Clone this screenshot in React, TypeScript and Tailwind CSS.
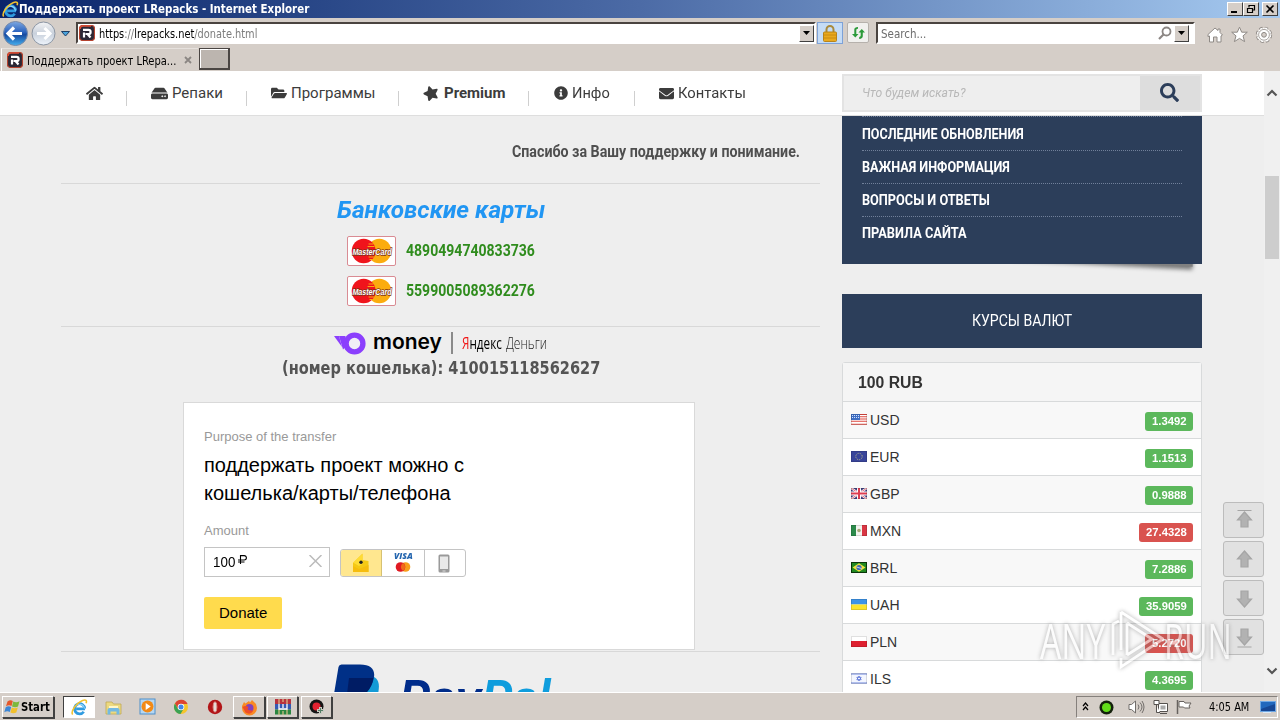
import React, { useLayoutEffect, useRef } from 'react';
import { FaHome, FaHdd, FaFolderOpen, FaStar, FaInfoCircle, FaEnvelope, FaSearch } from 'react-icons/fa';

/* Single line of text squeezed or stretched horizontally to a given width. */
function Fit({ w, className = '', children }: { w: number; className?: string; children: React.ReactNode }) {
  const ref = useRef<HTMLSpanElement>(null);
  useLayoutEffect(() => {
    const el = ref.current;
    if (el && el.offsetWidth) el.style.transform = `scaleX(${w / el.offsetWidth})`;
  }, [w]);
  return (
    <span className={`inline-flex shrink-0 justify-start whitespace-nowrap ${className}`} style={{ width: w }}>
      <span ref={ref} className="inline-block shrink-0 origin-left whitespace-pre">{children}</span>
    </span>
  );
}

const TAHOMA = "font-['DejaVu_Sans_Condensed','DejaVu_Sans',sans-serif]";
const RAISED = 'border border-t-white border-l-white border-r-[#404040] border-b-[#404040] bg-[#d5cec8]';

function IeLogo({ size = 16 }: { size?: number }) {
  return (
    <svg width={size} height={size} viewBox="0 0 16 16" fill="none">
      <path d="M13.2 9.2H4.8M12.9 9A4.8 4.8 0 1 0 12 12" stroke="#2f9be0" strokeWidth="2.6" />
      <path d="M12.7 9A4.8 4.8 0 0 0 4 7" stroke="#8fd4fa" strokeWidth="1" />
      <path d="M1.6 14.6C-.6 12 5 3.500 11 1.300c3-1 4.200 0 3.200 2.700" stroke="#f2c230" strokeWidth="1.500" />
    </svg>
  );
}

function Favicon() {
  return (
    <svg width="16" height="16" viewBox="0 0 16 16">
      <rect x=".5" y=".5" width="15" height="15" rx="3" fill="#2b2735" stroke="#b5432f" strokeWidth="1.200" />
      <path d="M1 4a3 3 0 0 1 3-3h8" stroke="#d94c34" strokeWidth="1.600" fill="none" />
      <path d="M4 4.800h5.500a2 2 0 0 1 0 4.200H6.500M5 7.500v5M8.500 9l3 3.500" stroke="#fff" strokeWidth="2.200" fill="none" />
    </svg>
  );
}

function DropArrow() {
  return (
    <span className={`flex h-[17px] w-[15px] shrink-0 items-center justify-center ${RAISED}`}>
      <svg width="7" height="4" viewBox="0 0 7 4"><path d="M0 0h7L3.500 4z" fill="#000" /></svg>
    </span>
  );
}

function TitleBar() {
  return (
    <div className="flex h-[18px] shrink-0 items-center bg-linear-to-r from-[#0a246a] via-[#4c6ba6] to-[#a6caf0] pr-[2px] pl-[2px]">
      <IeLogo size={17} />
      <Fit w={290} className={`${TAHOMA} text-[12px] leading-[18px] font-bold text-white`}>Поддержать проект LRepacks - Internet Explorer</Fit>
      <div className="ml-auto flex gap-0">
        <span className={`flex h-[14px] w-[16px] items-center justify-center ${RAISED}`}>
          <svg width="10" height="10"><path d="M1 8h6" stroke="#000" strokeWidth="2" /></svg>
        </span>
        <span className={`flex h-[14px] w-[16px] items-center justify-center ${RAISED}`}>
          <svg width="10" height="10" fill="none" stroke="#000"><path d="M3 1.500h6M3 1v2.500M8.500 1v5H7M1 4.500h6M1.500 4v4.500h5V4" strokeWidth="1.200" /></svg>
        </span>
        <span className={`ml-[3px] flex h-[14px] w-[16px] items-center justify-center ${RAISED}`}>
          <svg width="10" height="10"><path d="M1.500 1.500l7 7M8.500 1.500l-7 7" stroke="#000" strokeWidth="1.600" /></svg>
        </span>
      </div>
    </div>
  );
}

function AddressRow() {
  return (
    <div className="flex h-[30px] shrink-0 items-start">
      <svg width="72" height="30" viewBox="0 0 72 30" className="shrink-0">
        <defs>
          <linearGradient id="bk" x1="0" y1="0" x2="0" y2="1"><stop offset="0" stopColor="#7da8e2" /><stop offset=".45" stopColor="#2a62bd" /><stop offset=".55" stopColor="#174a9f" /><stop offset="1" stopColor="#45b0f0" /></linearGradient>
          <linearGradient id="fw" x1="0" y1="0" x2="0" y2="1"><stop offset="0" stopColor="#f4f4f5" /><stop offset=".5" stopColor="#c9d1dc" /><stop offset="1" stopColor="#eef4fb" /></linearGradient>
        </defs>
        <circle cx="15.500" cy="15.500" r="12" fill="url(#bk)" stroke="#788aa8" />
        <path d="M8 15.500h14M14 9.500l-6 6 6 6" stroke="#fff" strokeWidth="3.200" fill="none" />
        <circle cx="43.500" cy="15.500" r="11.500" fill="url(#fw)" stroke="#8b95a3" />
        <path d="M37 15.500h13M44.500 10l5.500 5.500-5.500 5.500" stroke="#fff" strokeWidth="3" fill="none" />
        <path d="M61.500 13.500h8l-4 4.500z" fill="#4aa3dc" stroke="#1e3f66" />
      </svg>
      <div className="mt-[4px] ml-[4px] flex h-[22px] w-[740px] shrink-0 items-center border-2 border-t-[#4a4440] border-r-white border-b-white border-l-[#4a4440] bg-white pl-[1px]">
        <Favicon />
        <Fit w={158} className={`${TAHOMA} mt-[1px] ml-[4px] text-[12px] leading-[16px] text-[#7c7c7c]`}>
          <span className="text-black">https</span>://<span className="text-black">lrepacks.net</span>/donate.html
        </Fit>
        <span className="ml-auto"><DropArrow /></span>
      </div>
      <span className="mt-[4px] ml-[1px] flex h-[22px] w-[26px] shrink-0 items-center justify-center border border-[#7da2d8] bg-[#c5dcf6]">
        <svg width="14" height="17" viewBox="0 0 14 17">
          <path d="M3.500 8V4.500a3.500 3.500 0 0 1 7 0V8" fill="none" stroke="#a98a3c" strokeWidth="2" />
          <rect x=".5" y="7" width="13" height="9.500" rx="1" fill="#e9a91f" stroke="#b8841a" />
          <path d="M1 10h12M1 13h12" stroke="#c98c14" />
        </svg>
      </span>
      <span className="mt-[4px] ml-[4px] flex h-[21px] w-[22px] shrink-0 items-center justify-center rounded-[2px] border border-[#b6b1ac] bg-[#f1f0ee]">
        <svg width="15" height="14" viewBox="0 0 15 14" fill="#2c9a3a">
          <path d="M3.300 8V3.500Q3.300 1 7 1v1.800Q5.300 2.800 5.300 4v4h2.200l-3.200 3.500L1 8z" /><path d="M11.800 6.500V10q0 2.700-3.600 2.900V11q1.500 0 1.500-1.400V6.500H7.500L10.800 3 14 6.500z" />
        </svg>
      </span>
      <div className="mt-[4px] ml-[7px] flex h-[22px] w-[319px] shrink-0 items-center border-2 border-t-[#4a4440] border-r-white border-b-white border-l-[#4a4440] bg-white pr-[4px] pl-[3px]">
        <Fit w={45} className={`${TAHOMA} mt-[2px] text-[12px] leading-[16px] text-[#6d6d6d]`}>Search...</Fit>
        <svg className="mr-[2px] ml-auto" width="14" height="14" viewBox="0 0 14 14" fill="none" stroke="#8b8683"><circle cx="8.500" cy="5.500" r="4" strokeWidth="1.800" /><path d="M5.500 8.500L1 13" strokeWidth="2.200" /></svg>
        <DropArrow />
      </div>
      <svg className="mt-[8px] ml-[11px]" width="68" height="18" viewBox="0 0 68 18" fill="#fff" stroke="#8f8a86" strokeLinejoin="round">
        <path d="M2 8.500L9 2l3 2.500V3h2v3.500l2.500 2.500-1.500 1V16h-4v-5H7.500v5h-4v-6l-1.500.5z" />
        <path d="M33.500 1.200l2.200 5h5.600l-4.300 3.700 1.600 5.700-5.100-3.200-5.100 3.200L30 9.900l-4.300-3.700h5.600z" />
        <circle cx="58" cy="8.800" r="6.500" strokeWidth="3.400" strokeDasharray="3 2.100" /><circle cx="58" cy="8.800" r="6.500" stroke="#fff" strokeWidth="1.600" strokeDasharray="2.200 2.900" strokeDashoffset="-.4" /><circle cx="58" cy="8.800" r="5.400" stroke="#a9a4a0" /><circle cx="58" cy="8.800" r="2.400" fill="#d5cec8" />
      </svg>
    </div>
  );
}

function TabRow() {
  return (
    <div className="flex h-[23px] shrink-0 items-start">
      <div className="ml-[1px] flex h-[23px] w-[197px] items-center border-t border-l border-t-[#e6e1dd] border-l-white pl-[5px]">
        <Favicon />
        <Fit w={149} className={`${TAHOMA} mt-[1px] ml-[4px] text-[12px] leading-[20px] text-black`}>Поддержать проект LRepa...</Fit>
        <svg className="ml-[8px]" width="8" height="8"><path d="M1 1l6 6M7 1L1 7" stroke="#8b8683" strokeWidth="1.800" /></svg>
      </div>
      <div className="ml-[1px] h-[22px] w-[31px] border-t border-r-2 border-b-2 border-l border-[#4a4542] bg-[#bcb5af] shadow-[inset_1px_1px_0_#fff]" />
    </div>
  );
}

const NAV = [
  { cell: 'w-[65px] pl-[24px]', icon: FaHome, size: 17, label: '', w: 0, bold: false, sep: true },
  { cell: 'w-[120px] pl-[24px]', icon: FaHdd, size: 17, label: 'Репаки', w: 51, bold: false, sep: true },
  { cell: 'w-[152px] pl-[24px]', icon: FaFolderOpen, size: 16, label: 'Программы', w: 84, bold: false, sep: true },
  { cell: 'w-[130px] pl-[24px]', icon: FaStar, size: 16, label: 'Premium', w: 61, bold: true, sep: true },
  { cell: 'w-[106px] pl-[25px]', icon: FaInfoCircle, size: 14, label: 'Инфо', w: 38, bold: false, sep: true },
  { cell: 'w-[130px] pl-[24px]', icon: FaEnvelope, size: 15, label: 'Контакты', w: 68, bold: false, sep: false },
];

function SiteHeader() {
  return (
    <header className="flex h-[45px] w-[1264px] shrink-0 border-b border-[#dedede] bg-white pl-[62px]">
      <nav className="flex w-[780px]">
        {NAV.map((n, i) => {
          const Icon = n.icon;
          return (
            <div key={i} className={`flex h-[44px] shrink-0 items-center text-[#3c3c3c] ${n.cell}`}>
              <Icon size={n.size} className={n.bold ? '-rotate-[18deg]' : ''} />
              {n.label && <Fit w={n.w} className={`text-[15px] leading-[22px] ${n.bold ? 'ml-[5px] font-bold' : 'ml-[4px]'}`}>{n.label}</Fit>}
              {n.sep && <span className="mt-[10px] ml-auto h-[15px] w-px bg-[#cfcfcf]" />}
            </div>
          );
        })}
      </nav>
      <div className="mt-[3px] flex h-[38px] w-[360px] items-stretch border-2 border-[#e3e3e3] bg-[#eeeeee]">
        <div className="flex flex-1 items-center pl-[18px]">
          <Fit w={104} className="text-[13px] text-[#b8b8b8] italic">Что будем искать?</Fit>
        </div>
        <div className="flex w-[60px] items-center justify-center bg-[#dddddd] pr-[2px] pb-[2px] text-[#2c3e5a]"><FaSearch size={19} /></div>
      </div>
    </header>
  );
}

function MasterCard() {
  return (
    <svg width="49" height="30" viewBox="0 0 50 30" preserveAspectRatio="none" className="shrink-0">
      <rect x=".5" y=".5" width="49" height="29" rx="1.500" fill="#fff" stroke="#d98a92" />
      <circle cx="33" cy="15" r="12.200" fill="#fbac0e" />
      <circle cx="17" cy="15" r="12.200" fill="#f0141c" />
      <path d="M22 8h5M21 10.500h7M22 21h6M23 23.500h3" stroke="#fbac0e" strokeWidth="1" />
      <text x="5.500" y="18.900" textLength="40" lengthAdjust="spacingAndGlyphs" fontFamily="Liberation Sans" fontSize="9.500" fontWeight="bold" fontStyle="italic" fill="#fff" stroke="#7a3015" strokeWidth="1.400" paintOrder="stroke">MasterCard</text>
    </svg>
  );
}

function YooMoney() {
  return (
    <div className="ml-[273px] flex h-[26px] items-center">
      <svg width="32" height="24" viewBox="0 0 32 24" className="shrink-0">
        <path d="M0 5h5l3 11z" fill="#8b3ffd" /><path d="M5 5h6.500v11L9 18.500z" fill="#8b3ffd" />
        <circle cx="20.500" cy="12.500" r="8.400" fill="#f1edf6" stroke="#8b3ffd" strokeWidth="5.400" />
      </svg>
      <Fit w={69} className="mb-[2px] ml-[7px] font-['Inter',sans-serif] text-[21px] leading-[22px] font-semibold text-black">money</Fit>
      <span className="ml-[9px] h-[22px] w-[2px] bg-[#8a8a8a]" />
      <Fit w={40} className="ml-[9px] font-['Open_Sans',sans-serif] text-[17px] leading-[22px] text-black"><span className="text-[#f01818]">Я</span>ндекс</Fit>
      <Fit w={41} className="ml-[4px] font-['Open_Sans',sans-serif] text-[17px] leading-[22px] font-light text-[#222]">Деньги</Fit>
    </div>
  );
}

function DonateWidget() {
  return (
    <div className="ml-[122px] flex h-[248px] w-[512px] flex-col border border-[#d9d9d9] bg-white pl-[20px] font-['Liberation_Sans',sans-serif]">
      <Fit w={132} className="mt-[26px] h-[16px] text-[13px] leading-[16px] text-[#999]">Purpose of the transfer</Fit>
      <Fit w={260} className="mt-[6px] h-[28px] text-[20px] leading-[28px] text-black">поддержать проект можно с</Fit>
      <Fit w={247} className="h-[28px] text-[20px] leading-[28px] text-black">кошелька/карты/телефона</Fit>
      <Fit w={45} className="mt-[16px] h-[16px] text-[13px] leading-[16px] text-[#999]">Amount</Fit>
      <div className="mt-[8px] flex h-[30px] items-start">
        <div className="flex h-[30px] w-[126px] items-center border border-[#c4c4c4] pl-[8px]">
          <Fit w={22} className="text-[14px] leading-[20px] text-black">100</Fit>
          <svg className="mb-[5px] ml-[3px]" width="10" height="9" viewBox="0 0 10 9" fill="none" stroke="#000"><path d="M2.500 9V.6h3.700a2.200 2.200 0 0 1 0 4.400H0M0 7h6.500" strokeWidth="1.100" /></svg>
          <svg className="mr-[7px] mb-[2px] ml-auto" width="13" height="12" viewBox="0 0 13 12"><path d="M.5 0l12 12M12.500 0l-12 12" stroke="#bbb" strokeWidth="1.500" /></svg>
        </div>
        <div className="mt-[2px] ml-[10px] flex h-[28px] w-[126px] overflow-hidden rounded-[3px] border border-[#c4c4c4]">
          <div className="flex w-[41px] items-center justify-center border-r border-[#d6c173] bg-[#ffe78f]">
            <svg width="18" height="20" viewBox="0 0 18 20"><path d="M1 10L10.500.5V7l6 1v11H1z" fill="#f5c915" /><path d="M1 9.500L10.500 1v10L7 13z" fill="#ffdc34" /><path d="M1 13l6 3 9.500-4v7H1z" fill="#f6bd0d" /><circle cx="9" cy="9.300" r="1.700" fill="#222" /></svg>
          </div>
          <div className="flex w-[43px] flex-col items-center border-r border-[#c4c4c4] pt-[1px]">
            <Fit w={19} className="h-[9px] font-['Open_Sans',sans-serif] text-[9px] leading-[9px] font-extrabold text-[#2566af] italic">VISA</Fit>
            <svg className="mt-[1px]" width="16" height="12" viewBox="0 0 16 12"><circle cx="10.500" cy="6" r="4.800" fill="#f79e1b" /><circle cx="5.500" cy="6" r="4.800" fill="#e01a22" /><path d="M8 2a4.800 4.800 0 0 1 0 8 4.800 4.800 0 0 1 0-8" fill="#f06a1c" /></svg>
          </div>
          <div className="flex flex-1 items-center justify-center pr-[2px]">
            <svg width="12" height="19" viewBox="0 0 12 19"><rect x=".5" y=".5" width="11" height="18" rx="1.500" fill="#9a9a9a" /><rect x="2" y="2.500" width="8" height="12.500" fill="#e9e9e9" /><path d="M4.500 17h3" stroke="#ddd" /></svg>
          </div>
        </div>
      </div>
      <div className="mt-[20px] flex h-[32px] w-[78px] items-center justify-center rounded-[2px] bg-[#ffdb4d]">
        <Fit w={48} className="text-[15px] leading-[20px] text-black">Donate</Fit>
      </div>
    </div>
  );
}

function Content() {
  return (
    <main className="ml-[61px] flex w-[759px] shrink-0 flex-col">
      <Fit w={288} className="mt-[26px] ml-[451px] h-[20px] text-[16px] leading-[20px] font-bold text-[#4f4f4f]">Спасибо за Вашу поддержку и понимание.</Fit>
      <div className="mt-[21px] h-px bg-[#d8d8d8]" />
      <Fit w={208} className="mt-[11px] mb-[1px] ml-[276px] h-[30px] text-[24px] leading-[30px] font-bold text-[#2196f3] italic">Банковские карты</Fit>
      {['4890494740833736', '5599005089362276'].map((n) => (
        <div key={n} className="mt-[10px] ml-[286px] flex h-[30px] items-center">
          <MasterCard />
          <Fit w={129} className="ml-[10px] text-[16px] leading-[24px] font-bold text-[#2f8c1d]">{n}</Fit>
        </div>
      ))}
      <div className="mt-[20px] mb-[3px] h-px bg-[#d8d8d8]" />
      <YooMoney />
      <Fit w={318} className="mt-[1px] ml-[221px] h-[20px] font-['DejaVu_Sans_Condensed','DejaVu_Sans',sans-serif] text-[17px] leading-[22px] font-bold text-[#545454]">(номер кошелька): 410015118562627</Fit>
      <div className="mt-[25px]"><DonateWidget /></div>
      <div className="mt-px h-px shrink-0 bg-[#d8d8d8]" />
      <div className="flex h-[40px] shrink-0 items-start pt-[12px] pl-[273px]">
        <svg width="47" height="30" viewBox="0 0 47 30" className="shrink-0">
          <path d="M38 12c7 3 8 8 6 18H20l3-18z" fill="#139ad6" />
          <path d="M4.500 3q.5-2.500 3-2.500H26c12 0 16 6 13.500 15-1.500 6-4 10.500-9 14.500H0z" fill="#003087" />
          <path d="M15 14h24.300c-.7 6-3.300 11-8 16H13z" fill="#001c64" />
        </svg>
        <Fit w={152} className="mt-[5px] ml-[18px] font-['Liberation_Sans',sans-serif] text-[52px] leading-[58px] font-bold italic"><span className="text-[#002c8a]">Pay</span><span className="text-[#0f9ddd]">Pal</span></Fit>
      </div>
    </main>
  );
}

function Flag({ code }: { code: string }) {
  return (
    <svg width="16" height="11" viewBox="0 0 16 11" className="shrink-0">
      {code === 'USD' && <><rect width="16" height="11" fill="#fff" /><path d="M0 .5h16M0 2.700h16M0 5h16M0 7.200h16M0 10.200h16" stroke="#e0483f" strokeWidth="1.100" /><rect width="9" height="6" fill="#3f6fc4" /><path d="M1 1.500h7M1 3.500h7" stroke="#cfe0ff" strokeDasharray="1 1" /></>}
      {code === 'EUR' && <><rect width="16" height="11" fill="#39459a" /><circle cx="8" cy="5.500" r="3.200" fill="none" stroke="#b5b58a" strokeDasharray="1 1" /></>}
      {code === 'GBP' && <><rect width="16" height="11" fill="#40407f" /><path d="M0 0l16 11M16 0L0 11" stroke="#fff" strokeWidth="2.200" /><path d="M0 0l16 11M16 0L0 11" stroke="#d8465a" strokeWidth=".8" /><path d="M8 0v11M0 5.500h16" stroke="#fff" strokeWidth="4" /><path d="M8 0v11M0 5.500h16" stroke="#dd3c50" strokeWidth="2" /></>}
      {code === 'MXN' && <><rect width="16" height="11" fill="#f4f4f0" /><rect width="5" height="11" fill="#2c8a4b" /><rect x="11" width="5" height="11" fill="#d93644" /><circle cx="8" cy="5.500" r="1.800" fill="#a8a878" /></>}
      {code === 'BRL' && <><rect width="16" height="11" fill="#218a21" /><path d="M8 1.200l6.500 4.300L8 9.800 1.500 5.500z" fill="#f0e043" /><circle cx="8" cy="5.500" r="2.600" fill="#3c68b4" /><path d="M5.500 5l5 1.500" stroke="#fff" strokeWidth=".7" /><rect x=".5" y=".5" width="15" height="10" fill="none" stroke="#0c3d0c" /></>}
      {code === 'UAH' && <><rect width="16" height="5.500" fill="#3c93e8" /><rect y="5.500" width="16" height="5.500" fill="#fbe32e" /></>}
      {code === 'PLN' && <><rect width="16" height="5.500" fill="#fff" /><rect y="5" width="16" height="6" fill="#de2030" /></>}
      {code === 'ILS' && <><rect width="16" height="11" fill="#f3f6ff" /><path d="M0 1h16M0 10h16" stroke="#6f86dc" strokeWidth="1.200" /><path d="M8 3l2.200 3.700H5.800zM8 8L5.800 4.300h4.400z" fill="none" stroke="#5a74d8" strokeWidth=".8" /></>}
      <rect x=".5" y=".5" width="15" height="10" fill="none" stroke="#000" strokeOpacity=".12" />
    </svg>
  );
}

const RATES = [
  { c: 'USD', v: '1.3492', up: true, w: 30 },
  { c: 'EUR', v: '1.1513', up: true, w: 30 },
  { c: 'GBP', v: '0.9888', up: true, w: 30 },
  { c: 'MXN', v: '27.4328', up: false, w: 31 },
  { c: 'BRL', v: '7.2886', up: true, w: 27 },
  { c: 'UAH', v: '35.9059', up: true, w: 30 },
  { c: 'PLN', v: '5.2720', up: false, w: 27 },
  { c: 'ILS', v: '4.3695', up: true, w: 21 },
];

const LINKS = [
  { t: 'ПОСЛЕДНИЕ ОБНОВЛЕНИЯ', w: 162 },
  { t: 'ВАЖНАЯ ИНФОРМАЦИЯ', w: 148 },
  { t: 'ВОПРОСЫ И ОТВЕТЫ', w: 128 },
  { t: 'ПРАВИЛА САЙТА', w: 105 },
];

function Sidebar() {
  return (
    <aside className="ml-[22px] flex w-[360px] shrink-0 flex-col">
      <div className="relative h-[148px] shrink-0">
        <div className="absolute right-[9px] bottom-[2px] h-[12px] w-[180px] rotate-[3deg] bg-[#808080] shadow-[0_3px_4px_#777]" />
        <div className="relative h-full bg-[#2c3e5a] px-[20px]">
          {LINKS.map((l) => (
            <div key={l.t} className="flex h-[33px] flex-col border-t border-dotted border-[#71809a] first:h-[34px] first:pt-[1px]">
              <Fit w={l.w} className="mt-[6px] text-[14px] leading-[20px] font-bold text-white">{l.t}</Fit>
            </div>
          ))}
        </div>
      </div>
      <div className="mt-[30px] flex h-[54px] shrink-0 items-center justify-center bg-[#2c3e5a]">
        <Fit w={100} className="text-[17px] text-white">КУРСЫ ВАЛЮТ</Fit>
      </div>
      <div className="mt-[14px] flex shrink-0 flex-col rounded-t-[3px] border border-[#d8dadb] bg-white font-['Liberation_Sans',sans-serif] text-[#333]">
        <div className="flex h-[38px] items-center bg-[#f5f5f5] pl-[15px]"><Fit w={65} className="pt-[1px] text-[16px] font-bold">100 RUB</Fit></div>
        {RATES.map((r, i) => (
          <div key={r.c} className={`flex h-[37px] items-start border-t border-[#d8dadb] pr-[8px] pl-[8px] ${i % 2 ? 'bg-white' : 'bg-[#f8f8f8]'}`}>
            <span className="mt-[12px] mr-[3px]"><Flag code={r.c} /></span>
            <Fit w={r.w} className="mt-[8px] text-[14px] leading-[20px]">{r.c}</Fit>
            <span className={`mt-[10px] ml-auto flex h-[19px] items-center justify-center rounded-[3px] text-[11px] font-bold text-white ${r.v.length > 6 ? 'w-[54px]' : 'w-[48px]'} ${r.up ? 'bg-[#5cb85c]' : 'bg-[#d9534f]'}`}>
              <Fit w={r.v.length > 6 ? 41 : 35}>{r.v}</Fit>
            </span>
          </div>
        ))}
      </div>
    </aside>
  );
}

const ARROWS = [
  'M13.500 8.500h14M20.500 10l7 8H24v7h-7v-7h-3.500z',
  'M20.500 10l7 8H24v8h-7v-8h-3.500z',
  'M20.500 27l7-8H24v-8h-7v8h-3.500z',
  'M13.500 28h14M20.500 26l7-8H24v-8h-7v8h-3.500z',
];

function ScrollButtons() {
  return (
    <div className="absolute top-[431px] left-[1223px] flex flex-col gap-[3px]">
      {ARROWS.map((d) => (
        <span key={d} className="h-[36px] w-[41px] rounded-[3px] border border-[#bcbcbc] bg-[#e1e1e1]">
          <svg width="39" height="34" viewBox="0 1 39 34"><path d={d} fill="#b2b2b2" stroke="#a5a5a5" strokeWidth="1.200" /></svg>
        </span>
      ))}
    </div>
  );
}

function Watermark() {
  return (
    <div className="absolute top-[538px] left-[1040px] flex h-[62px] items-center font-['Open_Sans',sans-serif] text-[49px] leading-[62px] font-normal text-white opacity-60 drop-shadow-[0_0_2px_#777]">
      <Fit w={65}>ANY</Fit>
      <svg width="59" height="66" viewBox="0 0 59 66" fill="none" stroke="#fff" className="shrink-0">
        <path d="M8 48V17l6-3M16 5l42 27-42 28V51M16 5v38M22 16v32M22 16l25 16-25 16" strokeWidth="2.800" />
      </svg>
      <Fit w={68}>RUN</Fit>
    </div>
  );
}

function PageScrollbar() {
  return (
    <div className="flex w-[16px] shrink-0 flex-col items-center bg-[#f0f0f0] pt-[17px]">
      <svg width="12" height="9" viewBox="0 0 12 9"><path d="M1.500 7.500L6 3l4.500 4.500" fill="none" stroke="#555" strokeWidth="2.200" /></svg>
      <div className="mt-[79px] h-[83px] w-[14px] bg-[#cdcdcd]" />
      <svg className="mt-auto mb-[16px]" width="12" height="9" viewBox="0 0 12 9"><path d="M1.500 1.500L6 6l4.500-4.500" fill="none" stroke="#555" strokeWidth="2.200" /></svg>
    </div>
  );
}

function Taskbar() {
  return (
    <footer className="flex h-[28px] shrink-0 items-start border-t border-white bg-[#d5cec8] pt-[3px] pr-[2px] pl-[2px] shadow-[0_-1px_0_#d5cec8]">
      <div className={`flex h-[22px] w-[52px] items-center pl-[1px] shadow-[1px_1px_0_#404040] ${RAISED}`}>
        <svg width="17" height="16" viewBox="0 0 17 16" className="shrink-0">
          <path d="M3.500 2.500c2-1.500 3.800-1.500 5.300-.4L7.500 7C6 6 4 6 2 7.200z" fill="#e4572a" /><path d="M9.300 2.500c2 1.200 4.200 1 6.200-.2l-1.500 5.200c-1.700 1-3.900 1-6 0z" fill="#7cb83c" />
          <path d="M1.700 8.200c1.800-1.300 3.800-1.200 5.500-.3l-1.400 5.100c-1.600-1-3.500-1-5.500.2z" fill="#3b86d6" /><path d="M7.800 8.500c1.800 1.100 4 1 6 0l-1.500 5c-1.900 1.100-4 1.100-5.900 0z" fill="#f2c02c" />
        </svg>
        <Fit w={29} className={`${TAHOMA} text-[12px] leading-[18px] font-bold text-black`}>Start</Fit>
      </div>
      <div className="ml-[9px] flex h-[22px] w-[32px] items-center justify-center border border-t-[#404040] border-r-white border-b-white border-l-[#404040] bg-white"><IeLogo size={17} /></div>
      <svg className="mt-[3px] ml-[10px] shrink-0" width="17" height="17" viewBox="0 0 17 17"><path d="M1 3h6l1.500 2H16v10H1z" fill="#ecd980" stroke="#c0a854" strokeWidth=".8" /><path d="M4 7h9v2H4z" fill="#fff7c8" /><path d="M2.500 15.500V11q0-2 2-2h8q2 0 2 2v4.500h-3v-3h-6v3z" fill="#73b9e2" /></svg>
      <svg className="mt-[2px] ml-[17px] shrink-0" width="17" height="17" viewBox="0 0 17 17"><rect x="1" y="1" width="15" height="15" fill="#b6d7f2" stroke="#4f8fca" /><circle cx="8.500" cy="8.500" r="6" fill="#f28a17" /><path d="M6.700 5l5 3.500-5 3.500z" fill="#fff" /></svg>
      <svg className="mt-[3px] ml-[17px] shrink-0" width="16" height="16" viewBox="0 0 16 16"><circle cx="8" cy="8" r="7" fill="#f5c52c" /><path d="M2 4.400A7 7 0 0 1 14.600 5H8L5 9.800z" fill="#dd4433" /><path d="M1.900 4.500A7 7 0 0 0 7.500 15l3-5H5z" fill="#3ba255" /><circle cx="8" cy="8" r="3.300" fill="#fff" /><circle cx="8" cy="8" r="2.500" fill="#4285e8" /></svg>
      <svg className="mt-[3px] ml-[18px] shrink-0" width="16" height="16" viewBox="0 0 16 16"><circle cx="8" cy="8" r="7.200" fill="#b21518" /><ellipse cx="8" cy="8" rx="1.900" ry="5.200" fill="#e6dad6" stroke="#d88a84" /></svg>
      <div className={`ml-[10px] flex h-[22px] w-[32px] items-center justify-center shadow-[1px_1px_0_#404040] ${RAISED}`}>
        <svg width="17" height="17" viewBox="0 0 17 17"><path d="M1 7l2-4 1.500 1.500L8 2l1 1.500L11 1l4 4 1 4a7.500 7.500 0 0 1-15 0z" fill="#f98a25" /><circle cx="8.500" cy="9" r="4" fill="#8340bd" /><path d="M1.500 8q3-2 6 0-3 4 5 3.500-3 5-8 2z" fill="#ed4d28" /></svg>
      </div>
      <div className={`ml-[2px] flex h-[22px] w-[31px] items-center justify-center shadow-[1px_1px_0_#404040] ${RAISED}`}>
        <svg width="16" height="16" viewBox="0 0 16 16"><rect width="16" height="5" fill="#b8323e" /><rect y="5" width="16" height="5.500" fill="#3559b3" /><rect y="10.500" width="16" height="5" fill="#2b8640" /><path d="M4 0v5M12 0v5M4 10v6M12 10v6M8 0v3M8 12v4" stroke="#d9c08a" strokeWidth="1.200" /><path d="M4 5v5h8V5M8 5v4" stroke="#fff" strokeWidth="1.300" fill="none" /></svg>
      </div>
      <div className={`ml-[3px] flex h-[22px] w-[31px] items-center justify-center shadow-[1px_1px_0_#404040] ${RAISED}`}>
        <svg width="16" height="16" viewBox="0 0 16 16"><circle cx="7.500" cy="7.500" r="7" fill="#151515" /><circle cx="7.500" cy="7.500" r="4" fill="#e22331" /><path d="M11.500 8v7M8 11.500h7" stroke="#c9c9c0" strokeWidth="3" /><path d="M11.500 9v5M9 11.500h5" stroke="#537e65" /></svg>
      </div>
      <div className="ml-auto flex h-[22px] w-[202px] items-center border border-t-[#85807c] border-r-white border-b-white border-l-[#85807c]">
        <svg className="mb-[2px] ml-[5px] shrink-0" width="7" height="9" viewBox="0 0 7 9" fill="none" stroke="#000" strokeWidth="1.200"><path d="M1 4l2.500-3L6 4M1 8l2.500-3L6 8" /></svg>
        <svg className="ml-[10px] shrink-0" width="15" height="15" viewBox="0 0 15 15"><circle cx="7.500" cy="7.500" r="7" fill="#14200c" /><circle cx="7.500" cy="7.500" r="4.500" fill="#62dd19" /></svg>
        <svg className="ml-[14px] shrink-0" width="17" height="16" viewBox="0 0 17 16" fill="none" stroke="#716d6a"><path d="M1 5.500h2.500L7.500 2v12l-4-3.500H1z" fill="#fff" /><path d="M10 5.500q2 2.500 0 5M12 3.500q4 4.500 0 9M14 2q4 6 0 12" /></svg>
        <svg className="ml-[8px] shrink-0" width="16" height="16" viewBox="0 0 16 16" fill="#fff" stroke="#55514e"><path d="M5.500 4.500h9v8h-9zM7 14.500h7" /><path d="M1 1.500h5v4H1zM3.500 5.500v8H7" /><rect x="7.500" y="6.500" width="5" height="4" fill="#aaa" stroke="none" /></svg>
        <svg className="ml-[7px] shrink-0" width="16" height="16" viewBox="0 0 16 16" fill="#fff" stroke="#67625f"><path d="M1.500 1v14" strokeWidth="1.500" /><path d="M3 2.500h5l1 1.500h6l-2 3 1 2H8.500l-1-1H3z" /></svg>
        <Fit w={40} className={`${TAHOMA} ml-[17px] text-[12px] leading-[18px] text-black`}>4:05 AM</Fit>
        <svg className="ml-[11px] shrink-0" width="16" height="14" viewBox="0 0 16 14"><rect x=".5" y="1.500" width="15" height="10" fill="#2268bd" stroke="#70a8e4" /><path d="M1 9l14-5v7H1z" fill="#174794" /><path d="M3 12.500h8" stroke="#dce9f7" /></svg>
      </div>
    </footer>
  );
}

export default function App() {
  return (
    <div className="flex h-[720px] w-[1280px] flex-col overflow-hidden bg-[#d5cec8] font-['Roboto',sans-serif]">
      <TitleBar />
      <AddressRow />
      <TabRow />
      <div className="relative flex h-[621px] shrink-0 overflow-hidden bg-[#eeeeee]">
        <div className="flex w-[1264px] shrink-0 flex-col">
          <SiteHeader />
          <div className="flex min-h-0 flex-1">
            <Content />
            <Sidebar />
          </div>
        </div>
        <PageScrollbar />
        <ScrollButtons />
        <Watermark />
      </div>
      <Taskbar />
    </div>
  );
}
